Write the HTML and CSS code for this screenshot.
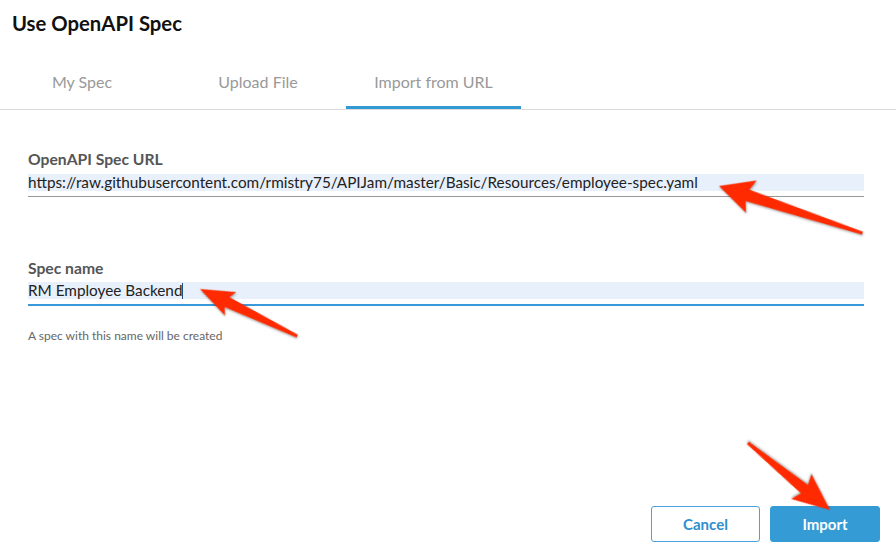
FILE: index.html
```html
<!DOCTYPE html>
<html>
<head>
<meta charset="utf-8">
<link rel="stylesheet" href="styles.css">
</head>
<body>
<div class="page">
  <h1 class="title">Use OpenAPI Spec</h1>
  <div class="tabs">
    <div class="tab tab-first">My Spec</div>
    <div class="tab">Upload File</div>
    <div class="tab active">Import from URL</div>
  </div>
  <div class="form">
    <div class="group">
      <div class="label">OpenAPI Spec URL</div>
      <div class="field">
        <div class="value">https://raw.githubusercontent.com/rmistry75/APIJam/master/Basic/Resources/employee-spec.yaml</div>
      </div>
    </div>
    <div class="group group-name">
      <div class="label">Spec name</div>
      <div class="field focused">
        <div class="value">RM Employee Backend<span class="caret"></span></div>
      </div>
      <div class="help">A spec with this name will be created</div>
    </div>
  </div>
  <div class="footer">
    <button class="btn btn-cancel">Cancel</button>
    <button class="btn btn-primary">Import</button>
  </div>
  <svg class="arrows" width="896" height="548" viewBox="0 0 896 548">
    <g class="arrow" transform="translate(719 186) rotate(18.2)">
      <polygon points="0,0 34,-17 30,-6 151,-1.6 151,1.6 30,6 34,17"/>
    </g>
    <g class="arrow" transform="translate(200 289) rotate(25.85)">
      <polygon points="0,0 34,-13 30,-5.5 108,-1.5 108,1.5 30,5.5 34,13"/>
    </g>
    <g class="arrow" transform="translate(830 510) rotate(219.25)">
      <polygon points="0,0 37,-16 33,-5.5 106,-1.5 106,1.5 33,5.5 37,16"/>
    </g>
  </svg>
</div>
</body>
</html>
```
FILE: styles.css
```css
* { box-sizing: border-box; }
html, body { margin: 0; padding: 0; background: #fff; }
body { font-family: Lato, "Open Sans", "Liberation Sans", sans-serif; color: #222; }
.page { position: relative; width: 896px; height: 548px; display: flex; flex-direction: column; overflow: hidden; }
.title { margin: 0; padding: 12px 12px 0; height: 57px; font-size: 20.3px; line-height: 22px; font-weight: 700; color: #111; }
.tabs { display: flex; border-bottom: 1px solid #dcdcdc; height: 53px; }
.tab { width: 176px; height: 52px; display: flex; align-items: center; justify-content: center; font-size: 16px; color: #999; border-bottom: 3px solid transparent; padding-bottom: 1px; }
.tab-first { width: 170px; padding-right: 6px; }
.tab.active { width: 175px; border-bottom-color: #3399d3; }
.form { padding: 40px 32px 0 28px; flex: 1; }
.label { font-size: 15.7px; line-height: 18px; font-weight: 700; color: #555; }
.field { margin-top: 6px; padding-bottom: 5px; border-bottom: 1px solid #999; }
.value { height: 17px; line-height: 17px; background: #e8f0fb; font-size: 15.3px; color: #222; white-space: nowrap; }
.group-name { margin-top: 62px; }
.field.focused { margin-top: 5px; padding-bottom: 5px; border-bottom: 2px solid #3a9ad9; }
.caret { display: inline-block; width: 1px; height: 16px; background: #1a4f8a; vertical-align: -3px; }
.help { margin-top: 23px; font-size: 12px; line-height: 14px; color: #666; }
.footer { display: flex; justify-content: flex-end; gap: 10px; padding: 0 16px 6px 0; }
.btn { width: 110px; height: 36px; border-radius: 3px; font-family: inherit; font-size: 15px; font-weight: 700; cursor: pointer; }
.btn-cancel { background: #fff; border: 1px solid #4ba3dc; color: #2f8fcf; width: 109px; }
.btn-primary { background: #349bd5; border: 1px solid #349bd5; color: #fff; }
.arrows { position: absolute; left: 0; top: 0; pointer-events: none; }
.arrow polygon { fill: #ff2a00; filter: drop-shadow(1px 1px 1px rgba(0,0,0,0.35)); }
```
